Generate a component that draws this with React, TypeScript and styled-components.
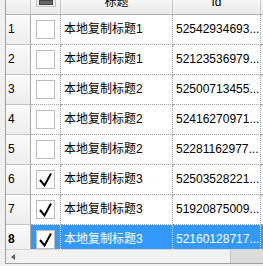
import styled, { createGlobalStyle } from "styled-components";

const GlobalStyle = createGlobalStyle`
  html, body {
    margin: 0;
    padding: 0;
    width: 263px;
    height: 266px;
    overflow: hidden;
    background: #f0f0f0;
  }
  * {
    box-sizing: border-box;
  }
`;

const COLUMNS = "25px 30px 112px 88px 80px";
const FONT = `"Liberation Sans", "Noto Sans CJK SC", sans-serif`;

const Frame = styled.div`
  margin-left: 5px;
  width: 258px;
  height: 264px;
  overflow: hidden;
  display: flex;
  flex-direction: column;
  background: #ffffff;
  border-left: 1px solid #a0a0a0;
  border-bottom: 1px solid #a0a0a0;
  font-family: ${FONT};
  font-size: 12px;
  color: #000;
`;

const HeaderRow = styled.div`
  display: grid;
  grid-template-columns: ${COLUMNS};
  height: 15px;
  flex: none;
  background: linear-gradient(#f6f6f6, #e9e9e9);
  border-bottom: 1px solid #b4b4b4;
`;

const HeaderCell = styled.div`
  overflow: hidden;
  border-right: 1px solid #c9c9c9;
  display: flex;
  justify-content: center;
  align-items: flex-start;
`;

const HeaderText = styled.span`
  line-height: 12px;
  margin-top: -4px;
  white-space: nowrap;
`;

const HeaderCheck = styled.div`
  width: 20px;
  height: 19px;
  margin-top: -12px;
  border: 1px solid #c4c4c4;
  background: #ececec;
  display: flex;
  justify-content: center;
  align-items: flex-end;
  padding-bottom: 1px;
`;

const HeaderCheckBar = styled.div`
  width: 14px;
  height: 5px;
  background: #666;
  border: 1px solid #454545;
`;

const Body = styled.div`
  flex: 1;
  overflow: hidden;
`;

const Row = styled.div`
  display: grid;
  grid-template-columns: ${COLUMNS};
  height: 30px;
`;

const RowHeader = styled.div<{ $current?: boolean }>`
  background: linear-gradient(#fafafa, #ededed);
  border-right: 1px solid #a8a8a8;
  border-bottom: 1px solid #c6c6c6;
  padding-left: 2px;
  line-height: 29px;
  font-size: 12px;
  font-weight: ${(p) => (p.$current ? "bold" : "normal")};
`;

const Cell = styled.div<{ $selected?: boolean }>`
  overflow: hidden;
  white-space: nowrap;
  line-height: 29px;
  padding-left: 3px;
  border-right: 1px dotted
    ${(p) => (p.$selected ? "rgba(255,255,255,0.75)" : "#a0a0a0")};
  border-bottom: 1px dotted #a0a0a0;
  background: ${(p) => (p.$selected ? "#3399ff" : "transparent")};
  color: ${(p) => (p.$selected ? "#ffffff" : "#000000")};
`;

const CheckCell = styled(Cell)`
  padding-left: 0;
  display: flex;
  justify-content: center;
  align-items: center;
`;

const CheckBox = styled.div`
  width: 19px;
  height: 19px;
  border: 1px solid #bcbcbc;
  background: #ffffff;
  display: flex;
  align-items: center;
  justify-content: center;
`;

const ScrollBar = styled.div`
  display: flex;
  height: 14px;
  flex: none;
  border-top: 1px solid #d6d6d6;
  background: #dcdcdc;
`;

const ArrowButton = styled.div`
  width: 14px;
  background: #f0f0f0;
  display: flex;
  align-items: center;
  justify-content: center;
`;

const ArrowLeft = styled.div`
  width: 0;
  height: 0;
  border-top: 3.5px solid transparent;
  border-bottom: 3.5px solid transparent;
  border-right: 4px solid #606060;
  margin-left: -1px;
`;

const Handle = styled.div`
  width: 211px;
  background: #f2f2f2;
  border-right: 1px solid #c4c4c4;
`;

const Track = styled.div`
  flex: 1;
`;

const rows = [
  { title: "本地复制标题1", id: "52542934693...", checked: false },
  { title: "本地复制标题1", id: "52123536979...", checked: false },
  { title: "本地复制标题2", id: "52500713455...", checked: false },
  { title: "本地复制标题2", id: "52416270971...", checked: false },
  { title: "本地复制标题2", id: "52281162977...", checked: false },
  { title: "本地复制标题3", id: "52503528221...", checked: true },
  { title: "本地复制标题3", id: "51920875009...", checked: true },
  { title: "本地复制标题3", id: "52160128717...", checked: true },
];

const selectedRow = 7;

function CheckMark() {
  return (
    <svg width="17" height="17" viewBox="0 0 17 17">
      <polyline
        points="3,9 7.5,14.5 14,2.5"
        fill="none"
        stroke="#000"
        strokeWidth="2"
        strokeLinejoin="miter"
      />
    </svg>
  );
}

export default function App() {
  return (
    <>
      <GlobalStyle />
      <Frame>
        <HeaderRow>
          <HeaderCell />
          <HeaderCell>
            <HeaderCheck>
              <HeaderCheckBar />
            </HeaderCheck>
          </HeaderCell>
          <HeaderCell>
            <HeaderText>标题</HeaderText>
          </HeaderCell>
          <HeaderCell>
            <HeaderText>Id</HeaderText>
          </HeaderCell>
          <HeaderCell />
        </HeaderRow>
        <Body>
          {rows.map((r, i) => {
            const sel = i === selectedRow;
            return (
              <Row key={i}>
                <RowHeader $current={sel}>{i + 1}</RowHeader>
                <CheckCell $selected={sel}>
                  <CheckBox>{r.checked && <CheckMark />}</CheckBox>
                </CheckCell>
                <Cell $selected={sel}>{r.title}</Cell>
                <Cell $selected={sel}>{r.id}</Cell>
                <Cell $selected={sel} />
              </Row>
            );
          })}
        </Body>
        <ScrollBar>
          <ArrowButton>
            <ArrowLeft />
          </ArrowButton>
          <Handle />
          <Track />
        </ScrollBar>
      </Frame>
    </>
  );
}
